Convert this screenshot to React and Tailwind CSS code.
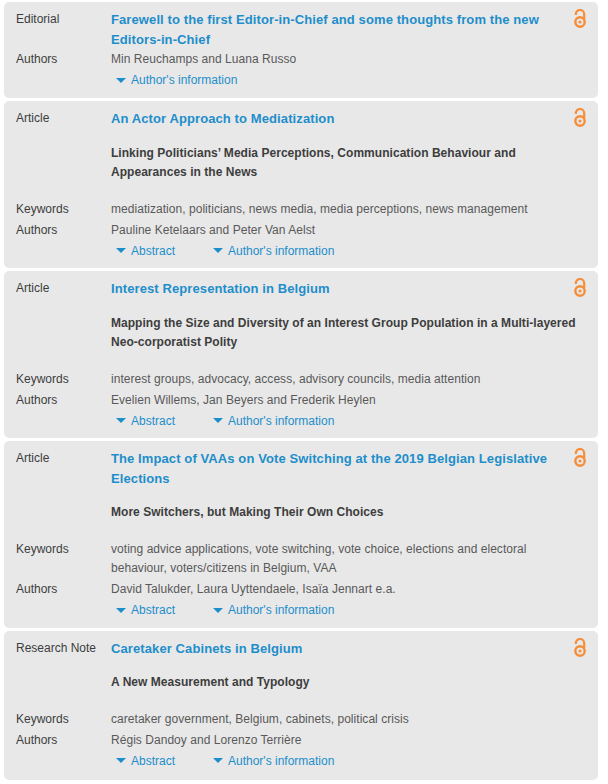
import React from 'react';

const items = [
  {
    type: 'Editorial',
    title: 'Farewell to the first Editor-in-Chief and some thoughts from the new Editors-in-Chief',
    authors: 'Min Reuchamps and Luana Russo',
  },
  {
    type: 'Article',
    title: 'An Actor Approach to Mediatization',
    subtitle: 'Linking Politicians’ Media Perceptions, Communication Behaviour and Appearances in the News',
    keywords: 'mediatization, politicians, news media, media perceptions, news management',
    authors: 'Pauline Ketelaars and Peter Van Aelst',
    abstract: true,
  },
  {
    type: 'Article',
    title: 'Interest Representation in Belgium',
    subtitle: 'Mapping the Size and Diversity of an Interest Group Population in a Multi-layered Neo-corporatist Polity',
    keywords: 'interest groups, advocacy, access, advisory councils, media attention',
    authors: 'Evelien Willems, Jan Beyers and Frederik Heylen',
    abstract: true,
  },
  {
    type: 'Article',
    title: 'The Impact of VAAs on Vote Switching at the 2019 Belgian Legislative Elections',
    subtitle: 'More Switchers, but Making Their Own Choices',
    keywords: 'voting advice applications, vote switching, vote choice, elections and electoral behaviour, voters/citizens in Belgium, VAA',
    authors: 'David Talukder, Laura Uyttendaele, Isaïa Jennart e.a.',
    abstract: true,
  },
  {
    type: 'Research Note',
    title: 'Caretaker Cabinets in Belgium',
    subtitle: 'A New Measurement and Typology',
    keywords: 'caretaker government, Belgium, cabinets, political crisis',
    authors: 'Régis Dandoy and Lorenzo Terrière',
    abstract: true,
  },
];

const OpenAccess = () => (
  <svg width="14" height="20" viewBox="0 0 14 20" fill="none" stroke="#f68d39" className="shrink-0">
    <path d="M2.8 6V5.2a4.2 4.2 0 0 1 8.4 0V10" strokeWidth="2.2" />
    <circle cx="7" cy="13" r="4.7" strokeWidth="2.4" />
    <circle cx="7" cy="13" r="1.5" fill="#f68d39" stroke="none" />
  </svg>
);

const Toggle = ({ label, className }) => (
  <span className={`flex items-center text-[#1e8ecb] ${className}`}>
    <span className="w-0 h-0 border-x-[5px] border-x-transparent border-t-[5px] border-t-[#1e8ecb] mr-[5px]"></span>
    {label}
  </span>
);

const Card = ({ item }) => (
  <div className={`bg-[#e8e8e8] rounded-[5px] ml-1 w-[594px] pl-3 pr-3 pt-[7px] last:pb-[9px] ${item.abstract ? 'pb-[7.25px]' : 'pb-2'}`}>
    <div className="flex">
      <div className="w-[95px] shrink-0 leading-5">{item.type}</div>
      <div className="flex-1 text-[13px] font-bold leading-[19.5px] pt-px text-[#1e8ecb] tracking-[0.1px] pr-3">{item.title}</div>
      <div className="w-5 flex justify-center -mr-1"><OpenAccess /></div>
    </div>
    {item.subtitle && (
      <div className="ml-[95px] font-bold leading-[19.5px] mt-[15px] mb-[17px] tracking-[0.04px]">{item.subtitle}</div>
    )}
    {item.keywords && (
      <div className="flex mb-[0.75px]">
        <div className="w-[95px] shrink-0 leading-[19.5px]">Keywords</div>
        <div className="flex-1 leading-[19.5px] text-[#595959] pr-10 tracking-[0.04px]">{item.keywords}</div>
      </div>
    )}
    <div className="flex">
      <div className="w-[95px] shrink-0 leading-5">Authors</div>
      <div className="flex-1 leading-5 text-[#595959] tracking-[0.04px]">{item.authors}</div>
    </div>
    <div className="flex ml-[100px] mt-px leading-5">
      {item.abstract && <Toggle label="Abstract" className="w-[97px]" />}
      <Toggle label="Author's information" />
    </div>
  </div>
);

export default function App() {
  return (
    <div className="bg-white w-[608px] h-[784px] pt-[2px] flex flex-col gap-[3px] text-[12px] text-[#3d3d3d] font-['Liberation_Sans',Arial,sans-serif] overflow-hidden">
      {items.map((item, i) => (
        <Card key={i} item={item} />
      ))}
    </div>
  );
}
